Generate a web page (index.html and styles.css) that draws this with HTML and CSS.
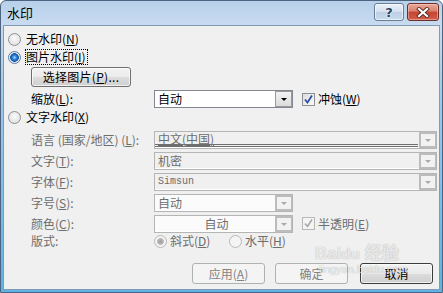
FILE: index.html
```html
<!DOCTYPE html>
<html lang="zh-CN">
<head>
<meta charset="UTF-8" />
<title>水印</title>
<link rel="stylesheet" href="styles.css">
</head>
<body>
<div class="window">
  <div class="titlebar">
    <span class="title">水印</span>
    <div class="caption-btns">
      <span class="cap help">?</span>
      <span class="cap close">
        <svg width="14" height="11" viewBox="0 0 14 11">
          <path d="M3 2 L11 9 M11 2 L3 9" stroke="#5a2a24" stroke-width="4" stroke-linecap="square"/>
          <path d="M3 2 L11 9 M11 2 L3 9" stroke="#fff" stroke-width="2.2" stroke-linecap="square"/>
        </svg>
      </span>
    </div>
  </div>

  <div class="dialog">
    <div class="opt"><span class="radio"></span>无水印(<u>N</u>)</div>
    <div class="opt"><span class="radio on"></span><span class="focus">图片水印(<u>I</u>)</span></div>
    <div class="sub"><button class="btn pick">选择图片(<u>P</u>)...</button></div>
    <div class="field sub scale">
      <span class="lbl">缩放(<u>L</u>):</span>
      <div class="select short"><span class="val">自动</span><span class="drop"></span></div>
      <div class="chk">
        <span class="box">
          <svg width="11" height="11" viewBox="0 0 11 11"><path d="M2 5.5 L4.5 8.5 L9 1.5" fill="none" stroke="#2d4fa8" stroke-width="1.8"/></svg>
        </span>冲蚀(<u>W</u>)
      </div>
    </div>
    <div class="opt"><span class="radio"></span>文字水印(<u>X</u>)</div>

    <div class="off">
      <div class="field sub first">
        <span class="lbl">语言 (国家/地区) (<u>L</u>):</span>
        <div class="select wide lang"><span class="val"><u>中文(中国)</u></span><span class="drop"></span></div>
      </div>
      <div class="field sub">
        <span class="lbl">文字(<u>T</u>):</span>
        <div class="select wide"><span class="val">机密</span><span class="drop"></span></div>
      </div>
      <div class="field sub">
        <span class="lbl">字体(<u>F</u>):</span>
        <div class="select wide"><span class="val mono">Simsun</span><span class="drop"></span></div>
      </div>
      <div class="field sub">
        <span class="lbl">字号(<u>S</u>):</span>
        <div class="select short light"><span class="val">自动</span><span class="drop"></span></div>
      </div>
      <div class="field sub">
        <span class="lbl">颜色(<u>C</u>):</span>
        <div class="select short light"><span class="val center">自动</span><span class="drop"></span></div>
        <div class="chk">
          <span class="box">
            <svg width="11" height="11" viewBox="0 0 11 11"><path d="M2 5.5 L4.5 8.5 L9 1.5" fill="none" stroke="#a8a8a8" stroke-width="1.6"/></svg>
          </span>半透明(<u>E</u>)
        </div>
      </div>
      <div class="field sub layout">
        <span class="lbl">版式:</span>
        <div class="opt inline first-opt"><span class="radio dis-on"></span>斜式(<u>D</u>)</div>
        <div class="opt inline"><span class="radio dis"></span>水平(<u>H</u>)</div>
      </div>
    </div>

    <div class="actions">
      <button class="btn act dis apply">应用(<u>A</u>)</button>
      <button class="btn act dis ok">确定</button>
      <button class="btn act cancel">取消</button>
    </div>
  </div>

  <div class="wm">
    <div class="wm-logo">Bai<span class="paw">du</span> 经验</div>
    <div class="wm-url">jingyan.baidu.com</div>
  </div>
</div>
</body>
</html>
```

FILE: styles.css
```css
* { box-sizing: border-box; margin: 0; padding: 0; }
body { width: 443px; height: 293px; background: #fff; font: 12px/16px "Noto Sans CJK SC", "Liberation Sans", sans-serif; color: #000; overflow: hidden; }
u { text-decoration: underline; }

/* === window frame === */
.window {
  position: relative;
  width: 443px;
  height: 293px;
  border: 1px solid #4d6480;
  border-radius: 6px 6px 0 0;
  background: linear-gradient(#b8d0ea 0, #c8dbf0 24px, #9fcaec 90px, #5cb3e4 100%);
  padding: 0 2px 2px;
  display: flex;
  flex-direction: column;
}
.titlebar { height: 24px; display: flex; align-items: flex-start; justify-content: space-between; padding-right: 1px; }
.title { font-size: 13px; line-height: 22px; padding-left: 4px; padding-top: 1px; color: #000; }
.caption-btns { display: flex; gap: 3px; margin-top: 2px; }
.cap { height: 18px; border-radius: 3px; display: flex; align-items: center; justify-content: center; }
.help {
  width: 30px;
  border: 1px solid #6a7d96;
  background: linear-gradient(#eaf1f8, #d3e0ee 50%, #bccfe4 51%, #c9dbee);
  box-shadow: inset 0 0 0 1px rgba(255,255,255,.6);
  font: bold 13px/1 "DejaVu Sans", sans-serif;
  color: #2c4460;
  text-shadow: 0 0 2px #fff, 0 0 1px #fff;
}
.close {
  width: 32px;
  border: 1px solid #6b2f28;
  background: linear-gradient(#e9a897, #d98270 45%, #c6432f 50%, #d0604b);
  box-shadow: inset 0 0 0 1px rgba(255,220,210,.45);
}

/* === dialog body === */
.dialog {
  flex: 1;
  background: #f0f0f0;
  border: 1px solid #8299b4;
  padding: 4px 6px 0 4px;
  display: flex;
  flex-direction: column;
}
.opt { display: flex; align-items: center; height: 18px; white-space: nowrap; }
.radio {
  width: 13px; height: 13px; border-radius: 50%; flex: none; margin-right: 5px;
  border: 1px solid #8c8f93;
  background: radial-gradient(circle at 50% 40%, #fafafa 0, #e4e4e4 70%, #d6d6d6 100%);
}
.radio.on {
  border-color: #5a7fa8;
  background: radial-gradient(circle at 50% 50%, #bfe7ff 0, #3a9ae8 1.5px, #1c6ccc 3px, #0f4f9e 4px, #e8e8e8 4.6px, #f6f6f6 100%);
}
.radio.dis { border-color: #b8b8b8; background: #f4f4f4; }
.radio.dis-on {
  border-color: #b8b8b8;
  background: radial-gradient(circle, #9d9d9d 0, #b9b9b9 3px, #f4f4f4 3.8px, #f4f4f4 100%);
}
.focus { outline: 1px dotted #000; outline-offset: 0; padding: 0 1px 0 0; line-height: 14px; }
.sub { padding-left: 23px; }

.btn {
  font: inherit;
  height: 20px;
  border: 1px solid #707070;
  border-radius: 3px;
  background: linear-gradient(#f2f2f2, #ebebeb 50%, #dddddd 51%, #cfcfcf);
  box-shadow: inset 0 0 0 1px rgba(255,255,255,.7);
  color: #000;
}
.pick { width: 100px; margin-top: 1px; line-height: 16px; letter-spacing: .3px; }

.field { display: flex; align-items: center; height: 21px; white-space: nowrap; }
.scale { height: 18px; margin-top: 3px; }
.lbl { width: 123px; flex: none; }

.select { display: flex; height: 18px; border: 1px solid #828790; background: #fff; flex: none; }
.select.short { width: 139px; }
.select.wide { width: 283px; }
.val { flex: 1; padding-left: 3px; line-height: 16px; overflow: hidden; }
.val.center { text-align: center; }
.val.mono { font: 10px/16px "Liberation Mono", monospace; }
.drop {
  width: 17px; flex: none;
  border: 1px solid #9a9a9a;
  background: linear-gradient(#f2f2f2, #dcdcdc);
  display: flex; align-items: center; justify-content: center;
}
.drop::after { content: ""; border-left: 3px solid transparent; border-right: 3px solid transparent; border-top: 3px solid #000; margin-top: 1px; }

.chk { display: flex; align-items: center; margin-left: 9px; }
.box {
  width: 13px; height: 13px; margin-right: 3px; flex: none;
  border: 1px solid #8c8f93;
  background: linear-gradient(135deg, #dcdcdc, #fbfbfb);
  display: flex; align-items: center; justify-content: center;
}

/* === disabled text-watermark section === */
.off { color: #6d6d6d; }
.off .first { margin-top: 3px; }
.off .select { border-color: #b5b5b5; background: #f0f0f0; box-shadow: inset -1px -1px #fff; }
.off .select.light { background: #fbfbfb; }
.off .drop { border: 2px solid #bcbcbc; border-right-width: 1px; background: #f2f2f2; }
.off .drop::after { border-top-color: #a9a9a9; }
.off .box { border-color: #b8b8b8; background: #f4f4f4; }
.lang .val { border-bottom: 3px double #707070; margin: 0 1px 1px 0; line-height: 13px; overflow: visible; }
.layout { height: 16px; margin-top: -1px; }
.opt.inline { height: 16px; }
.first-opt { width: 75px; }
.opt.inline .radio { margin-right: 3px; }

/* === bottom buttons === */
.actions { display: flex; justify-content: flex-end; margin-top: 14px; }
.act { width: 73px; height: 21px; }
.apply { margin-right: 10px; }
.ok { margin-right: 12px; }
.btn.dis { border-color: #adb2b5; background: #f4f4f4; box-shadow: none; color: #838383; }
.cancel { border-color: #3c3c3c; }

/* screenshot watermark overlay */
.wm { position: absolute; left: 314px; top: 244px; color: rgba(255,255,255,.75); text-shadow: 0 0 1px rgba(0,0,0,.35); pointer-events: none; }
.wm-logo { font: bold 17px/18px "Liberation Sans", sans-serif; }
.wm-logo .paw { font-size: 15px; }
.wm-url { font: 11px/12px "Liberation Sans", sans-serif; margin-left: 4px; }
```
